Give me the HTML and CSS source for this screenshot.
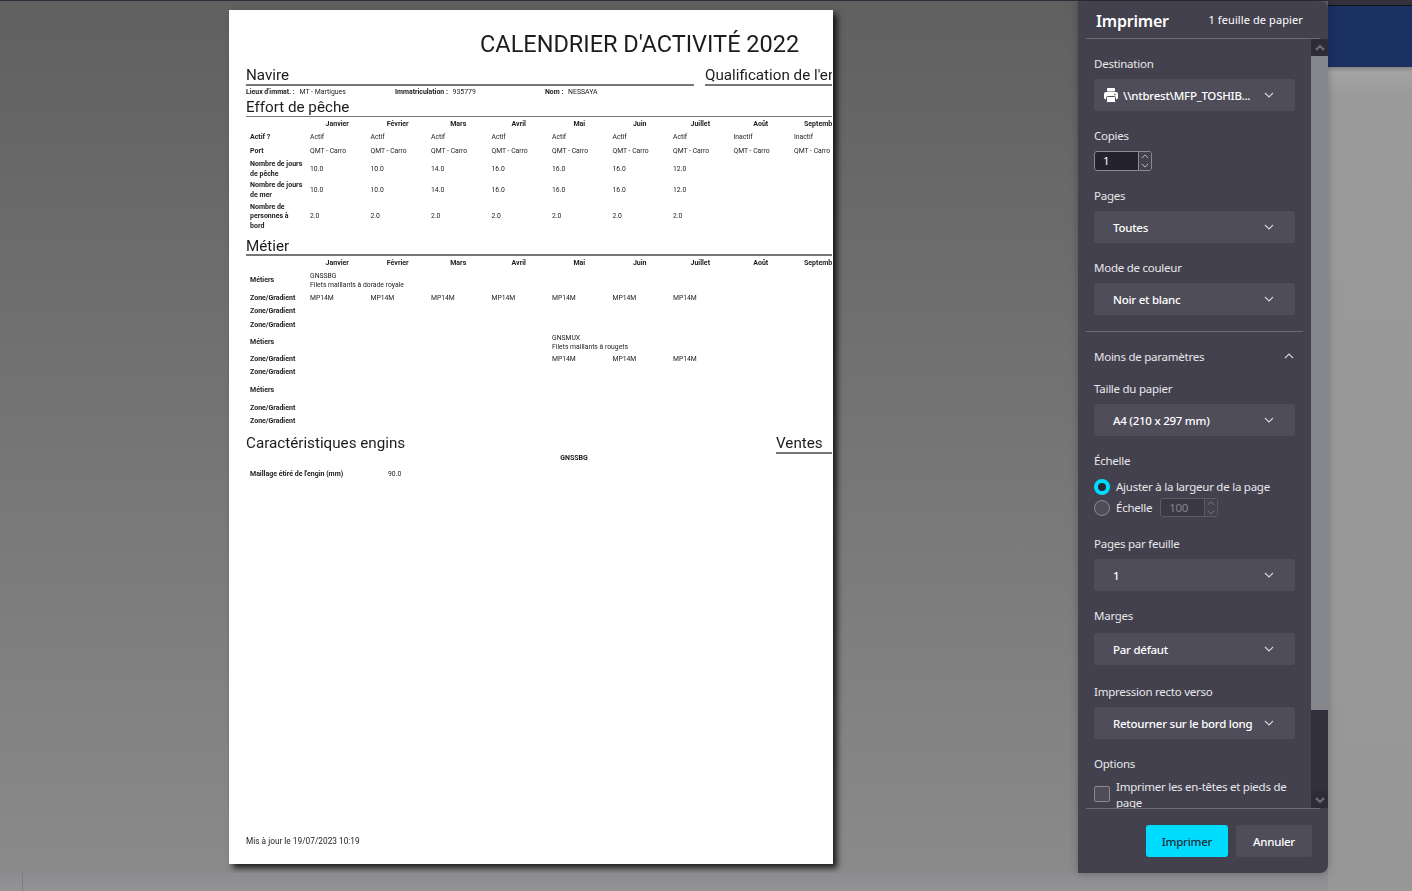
FILE: index.html
```html
<!DOCTYPE html>
<html lang="fr">
<head>
<meta charset="UTF-8">
<meta name="viewport" content="width=device-width, initial-scale=1.0">
<title>Imprimer</title>
<link rel="stylesheet" href="styles.css">
</head>
<body>
  <svg class="defs" aria-hidden="true">
    <symbol id="chev-down" viewBox="0 0 10 10"><path d="M1 3l4 4 4-4" fill="none" stroke="currentColor" stroke-width="1.1"/></symbol>
    <symbol id="chev-up" viewBox="0 0 10 10"><path d="M1 7l4-4 4 4" fill="none" stroke="currentColor" stroke-width="1.1"/></symbol>
    <symbol id="arrow-up" viewBox="0 0 10 10"><path d="M1 7l4-4 4 4" fill="none" stroke="currentColor" stroke-width="2.2"/></symbol>
    <symbol id="arrow-down" viewBox="0 0 10 10"><path d="M1 3l4 4 4-4" fill="none" stroke="currentColor" stroke-width="2.2"/></symbol>
  </svg>

  <div class="stage">
    <div class="preview">
      <div class="canvas">
        <div class="paper">
          <div class="sheet">
            <h1 class="doc-title">CALENDRIER D'ACTIVITÉ 2022</h1>

            <div class="head-row">
              <h2 class="head head-navire">Navire</h2>
              <h2 class="head head-qualif">Qualification de l'entreprise</h2>
            </div>
            <div class="info-row">
              <span class="info info-lieu"><b>Lieux d'immat. :</b> MT - Martigues</span>
              <span class="info info-immat"><b>Immatriculation :</b> 935779</span>
              <span class="info"><b>Nom :</b> NESSAYA</span>
            </div>

            <h2 class="head head-thin">Effort de pêche</h2>
            <table class="grid">
              <colgroup><col class="col-label"><col class="col-m"><col class="col-m"><col class="col-m"><col class="col-m"><col class="col-m"><col class="col-m"><col class="col-m"><col class="col-m"><col class="col-m"></colgroup>
              <tr class="r-13 months"><th></th><th>Janvier</th><th>Février</th><th>Mars</th><th>Avril</th><th>Mai</th><th>Juin</th><th>Juillet</th><th>Août</th><th>Septembre</th></tr>
              <tr class="r-14"><th>Actif ?</th><td>Actif</td><td>Actif</td><td>Actif</td><td>Actif</td><td>Actif</td><td>Actif</td><td>Actif</td><td>Inactif</td><td>Inactif</td></tr>
              <tr class="r-14"><th>Port</th><td>QMT - Carro</td><td>QMT - Carro</td><td>QMT - Carro</td><td>QMT - Carro</td><td>QMT - Carro</td><td>QMT - Carro</td><td>QMT - Carro</td><td>QMT - Carro</td><td>QMT - Carro</td></tr>
              <tr class="r-21"><th>Nombre de jours de pêche</th><td>10.0</td><td>10.0</td><td>14.0</td><td>16.0</td><td>16.0</td><td>16.0</td><td>12.0</td></tr>
              <tr class="r-21"><th>Nombre de jours de mer</th><td>10.0</td><td>10.0</td><td>14.0</td><td>16.0</td><td>16.0</td><td>16.0</td><td>12.0</td></tr>
              <tr class="r-32"><th>Nombre de personnes à bord</th><td>2.0</td><td>2.0</td><td>2.0</td><td>2.0</td><td>2.0</td><td>2.0</td><td>2.0</td></tr>
            </table>

            <h2 class="head head-metier">Métier</h2>
            <table class="grid">
              <colgroup><col class="col-label"><col class="col-m"><col class="col-m"><col class="col-m"><col class="col-m"><col class="col-m"><col class="col-m"><col class="col-m"><col class="col-m"><col class="col-m"></colgroup>
              <tr class="r-13 months"><th></th><th>Janvier</th><th>Février</th><th>Mars</th><th>Avril</th><th>Mai</th><th>Juin</th><th>Juillet</th><th>Août</th><th>Septembre</th></tr>
              <tr class="r-22"><th>Métiers</th><td class="nowrap">GNSSBG<br>Filets maillants à dorade royale</td></tr>
              <tr class="r-13"><th>Zone/Gradient</th><td>MP14M</td><td>MP14M</td><td>MP14M</td><td>MP14M</td><td>MP14M</td><td>MP14M</td><td>MP14M</td></tr>
              <tr class="r-14"><th>Zone/Gradient</th></tr>
              <tr class="r-13"><th>Zone/Gradient</th></tr>
              <tr class="r-22"><th>Métiers</th><td></td><td></td><td></td><td></td><td class="nowrap">GNSMUX<br>Filets maillants à rougets</td></tr>
              <tr class="r-12"><th>Zone/Gradient</th><td></td><td></td><td></td><td></td><td>MP14M</td><td>MP14M</td><td>MP14M</td></tr>
              <tr class="r-14"><th>Zone/Gradient</th></tr>
              <tr class="r-22"><th>Métiers</th></tr>
              <tr class="r-13"><th>Zone/Gradient</th></tr>
              <tr class="r-14"><th>Zone/Gradient</th></tr>
            </table>

            <div class="head-row head-row-engins">
              <h2 class="head head-plain">Caractéristiques engins</h2>
              <h2 class="head head-ventes">Ventes</h2>
            </div>
            <table class="grid grid-engins">
              <colgroup><col class="col-engin"><col class="col-val"></colgroup>
              <tr class="r-9 months"><th></th><th>GNSSBG</th></tr>
              <tr class="r-22"><th>Maillage étiré de l'engin (mm)</th><td>90.0</td></tr>
            </table>

            <p class="updated">Mis à jour le 19/07/2023 10:19</p>
          </div>
        </div>
      </div>
      <div class="strip"><div class="strip-cell"></div></div>
    </div>

    <div class="side">
      <div class="side-top"></div>
      <div class="side-blue"></div>
      <div class="side-rest"></div>
    </div>

    <aside class="dialog">
      <header class="dialog-head">
        <span class="dialog-title">Imprimer</span>
        <span class="dialog-count">1 feuille de papier</span>
      </header>

      <div class="dialog-body">
        <div class="settings">
          <div class="field">
            <label class="lbl">Destination</label>
            <div class="select select-printer">
              <svg class="printer" viewBox="0 0 16 16">
                <rect class="printer-fill" x="4" y="1" width="8" height="3.500" rx="0.800"/>
                <rect class="printer-fill" x="1" y="5" width="14" height="7.500" rx="2"/>
                <circle class="printer-cut" cx="12" cy="7.500" r="0.800"/>
                <rect class="printer-fill printer-tray" x="3.500" y="9.500" width="9" height="6" rx="1"/>
              </svg>
              <span class="select-text">\\ntbrest\MFP_TOSHIB...</span>
              <svg class="chev"><use href="#chev-down"/></svg>
            </div>
          </div>
          <div class="field">
            <label class="lbl">Copies</label>
            <div class="spin spin-copies">
              <span class="spin-val">1</span>
              <span class="spin-btns"><svg><use href="#chev-up"/></svg><svg><use href="#chev-down"/></svg></span>
            </div>
          </div>
          <div class="field">
            <label class="lbl">Pages</label>
            <div class="select"><span class="select-text">Toutes</span><svg class="chev"><use href="#chev-down"/></svg></div>
          </div>
          <div class="field">
            <label class="lbl">Mode de couleur</label>
            <div class="select"><span class="select-text">Noir et blanc</span><svg class="chev"><use href="#chev-down"/></svg></div>
          </div>

          <hr class="sep">

          <div class="more"><span>Moins de paramètres</span><svg class="chev"><use href="#chev-up"/></svg></div>

          <div class="field">
            <label class="lbl">Taille du papier</label>
            <div class="select"><span class="select-text">A4 (210 x 297 mm)</span><svg class="chev"><use href="#chev-down"/></svg></div>
          </div>
          <div class="field field-scale">
            <label class="lbl">Échelle</label>
            <div class="radio-row radio-row-first"><span class="radio radio-on"></span><span class="opt">Ajuster à la largeur de la page</span></div>
            <div class="radio-row">
              <span class="radio"></span><span class="opt">Échelle</span>
              <div class="spin spin-scale">
                <span class="spin-val">100</span>
                <span class="spin-btns"><svg><use href="#chev-up"/></svg><svg><use href="#chev-down"/></svg></span>
              </div>
            </div>
          </div>
          <div class="field">
            <label class="lbl">Pages par feuille</label>
            <div class="select"><span class="select-text">1</span><svg class="chev"><use href="#chev-down"/></svg></div>
          </div>
          <div class="field field-marges">
            <label class="lbl lbl-wide">Marges</label>
            <div class="select"><span class="select-text">Par défaut</span><svg class="chev"><use href="#chev-down"/></svg></div>
          </div>
          <div class="field">
            <label class="lbl">Impression recto verso</label>
            <div class="select"><span class="select-text">Retourner sur le bord long</span><svg class="chev"><use href="#chev-down"/></svg></div>
          </div>
          <div class="field">
            <label class="lbl">Options</label>
            <div class="check-row"><span class="check"></span><span class="opt opt-wrap">Imprimer les en-têtes et pieds de page</span></div>
          </div>
        </div>

        <div class="scrollbar">
          <div class="sb-btn"><svg><use href="#arrow-up"/></svg></div>
          <div class="sb-thumb"></div>
          <div class="sb-track"></div>
          <div class="sb-btn"><svg><use href="#arrow-down"/></svg></div>
        </div>
      </div>

      <footer class="dialog-foot">
        <button class="btn btn-primary">Imprimer</button>
        <button class="btn">Annuler</button>
      </footer>
    </aside>
  </div>
</body>
</html>
```

FILE: styles.css
```css
* {
  box-sizing: border-box;
}

html, body {
  margin: 0;
  padding: 0;
}

.defs {
  display: none;
}

.stage {
  position: relative;
  display: flex;
  width: 1412px;
  height: 891px;
  overflow: hidden;
  background-color: #979798;
}

/* preview area */
.preview {
  width: 1328px;
  display: flex;
  flex-direction: column;
}

.canvas {
  height: 873px;
  padding: 9px 0 0 229px;
  border-top: 1px solid #2f2d3a;
  background: linear-gradient(#606060, #8a8a8a);
}

.strip {
  flex: 1;
  background: linear-gradient(#8c8c8e, #949496);
}

.strip-cell {
  width: 23px;
  height: 100%;
  border-right: 1px solid #7c7c7e;
}

.paper {
  width: 604px;
  height: 854px;
  padding: 0 1px 0 17px;
  background-color: #ffffff;
  box-shadow: 4px 4px 6px rgba(0, 0, 0, 0.8);
}

/* the preview is a scaled-down pdf, so the text is a bit soft */
.sheet {
  height: 100%;
  display: flex;
  flex-direction: column;
  overflow: hidden;
  color: #1c1c1c;
  font-family: Roboto, "Liberation Sans", sans-serif;
  filter: blur(0.25px);
}

.doc-title {
  margin: 20px 0 8px;
  padding-left: 234px;
  font-size: 23.500px;
  line-height: 28px;
  font-weight: 400;
  white-space: nowrap;
}

.head-row {
  display: flex;
  gap: 11px;
}

.head {
  margin: 0;
  font-size: 15.200px;
  line-height: 19px;
  font-weight: 400;
  white-space: nowrap;
  flex-shrink: 0;
}

.head-navire,
.head-qualif,
.head-ventes,
.head-metier {
  border-bottom: 2px solid #777777;
}

.head-navire,
.head-qualif {
  line-height: 18px;
}

.head-navire {
  width: 448px;
}

.head-thin {
  padding-top: 2px;
  line-height: 17px;
  border-bottom: 1px solid #777777;
}

.head-metier {
  margin-top: 2px;
  padding-top: 4px;
  line-height: 15px;
}

.head-row-engins {
  justify-content: space-between;
  margin-top: 4px;
}

.head-row-engins .head {
  padding-top: 2px;
  line-height: 17px;
}

.head-ventes {
  width: 56px;
}

.info-row {
  display: flex;
  height: 11px;
  font-size: 6.900px;
  line-height: 12px;
  white-space: nowrap;
}

.info b {
  margin-right: 3px;
}

.info-lieu {
  width: 149px;
}

.info-immat {
  width: 150px;
}

.grid {
  width: 605.500px;
  flex-shrink: 0;
  margin-top: 1px;
  table-layout: fixed;
  border-collapse: collapse;
  font-size: 6.800px;
  line-height: 9.500px;
}

.col-label {
  width: 61px;
}

.col-m {
  width: 60.500px;
}

.col-engin {
  width: 139px;
}

.col-val {
  width: 378px;
}

.grid-engins {
  width: 517px;
  margin-top: 0;
}

.grid th,
.grid td {
  padding: 0 0 0 4px;
  text-align: left;
  vertical-align: middle;
}

.grid th {
  padding-right: 3px;
  font-size: 7px;
}

.grid td {
  padding-left: 3px;
  font-weight: 400;
}

.grid .months th {
  padding: 0;
  text-align: center;
}

.grid-engins th {
  white-space: nowrap;
}

.nowrap {
  white-space: nowrap;
}

.r-9 { height: 9px; }
.r-12 { height: 12px; }
.r-13 { height: 13px; }
.r-14 { height: 14px; }
.r-21 { height: 21px; }
.r-22 { height: 22px; }
.r-32 { height: 32px; }

.updated {
  margin: auto 0 18px;
  font-size: 8.300px;
  line-height: 10px;
}

/* right of the dialog */
.side {
  flex: 1;
  display: flex;
  flex-direction: column;
}

.side-top {
  height: 6px;
  background-color: #34313d;
  border-bottom: 1px solid #111111;
}

.side-blue {
  height: 61px;
  background-color: #1a3161;
}

.side-rest {
  flex: 1;
  background: linear-gradient(#858586 0, #a4a4a5 5px, #9a9a9b 30px, #979798 100%);
}

/* print dialog */
.dialog {
  position: absolute;
  left: 1078px;
  top: 1px;
  width: 250px;
  height: 872px;
  display: flex;
  flex-direction: column;
  padding-left: 8px;
  border-radius: 0 8px 8px 0;
  background-color: #43414e;
  box-shadow: 0 0 8px rgba(0, 0, 0, 0.25);
  color: #ffffff;
  font-family: "Noto Sans", "Open Sans", sans-serif;
  font-size: 11.500px;
  letter-spacing: -0.25px;
}

.dialog-head {
  width: 234px;
  height: 38px;
  flex-shrink: 0;
  display: flex;
  align-items: center;
  justify-content: space-between;
  padding: 2px 17px 0 10px;
  border-bottom: 1px solid #6b6975;
}

.dialog-title {
  font-size: 16px;
  font-weight: 600;
  letter-spacing: -0.2px;
}

.dialog-count {
  margin-bottom: 2px;
  font-size: 11px;
  letter-spacing: 0.1px;
}

.dialog-body {
  flex: 1;
  min-height: 0;
  display: flex;
}

.settings {
  width: 225px;
  overflow: hidden;
  padding-top: 16px;
}

.field {
  width: 201px;
  margin: 0 0 16px 8px;
}

.field-scale {
  margin-bottom: 17px;
}

.field-marges {
  margin-bottom: 18px;
}

.lbl {
  display: block;
  height: 16px;
  margin-bottom: 8px;
  line-height: 18px;
  color: #e8e8ea;
}

.lbl-wide {
  margin-bottom: 10px;
}

.select {
  display: flex;
  align-items: center;
  justify-content: space-between;
  height: 32px;
  padding: 0 21px 0 19px;
  border-radius: 3px;
  background-color: #4f4d5a;
  font-weight: 500;
  white-space: nowrap;
}

.select-printer {
  padding-left: 9px;
}

.printer {
  width: 16px;
  height: 16px;
  flex-shrink: 0;
  margin-right: 4px;
}

.printer-fill {
  fill: #ffffff;
}

.printer-cut {
  fill: #4f4d5a;
}

.printer-tray {
  stroke: #4f4d5a;
  stroke-width: 1;
}

.select-printer .select-text {
  flex: 1;
  white-space: nowrap;
}

.chev {
  width: 10px;
  height: 10px;
  flex-shrink: 0;
  color: #d8d8dc;
}

.spin {
  display: flex;
  height: 20px;
  border: 1px solid #8a8994;
  border-radius: 3px;
  overflow: hidden;
}

.spin-copies {
  width: 58px;
  background-color: #24222d;
}

.spin-val {
  flex: 1;
  padding-left: 8px;
  line-height: 18px;
}

.spin-btns {
  width: 13px;
  display: flex;
  flex-direction: column;
  border-left: 1px solid #8a8994;
  background-color: #43414e;
  color: #c8c8cc;
}

.spin-btns svg {
  width: 8px;
  height: 9px;
  margin-left: 2px;
}

.sep {
  width: 217px;
  height: 1px;
  margin: 0 0 16px;
  border: none;
  background-color: #6b6975;
}

.more {
  display: flex;
  align-items: center;
  justify-content: space-between;
  height: 16px;
  margin: 0 17px 16px 8px;
  color: #e8e8ea;
}

.radio-row {
  display: flex;
  align-items: center;
  height: 21px;
}

.radio-row-first {
  margin-top: 1px;
}

.radio {
  width: 16px;
  height: 16px;
  margin-right: 6px;
  flex-shrink: 0;
  border: 1px solid #8a8994;
  border-radius: 50%;
  background-color: #4f4d5a;
}

.radio-on {
  border: 4px solid #00dcff;
  background-color: #2a2834;
}

.spin-scale {
  width: 58px;
  height: 19px;
  margin-left: 8px;
  border-color: #5c5a67;
  background-color: #3a3845;
  color: #85838d;
}

.spin-scale .spin-btns {
  border-left-color: #5c5a67;
  color: #85838d;
}

.check-row {
  display: flex;
  align-items: flex-start;
  margin-top: 1px;
}

.check {
  width: 16px;
  height: 16px;
  margin: 7px 6px 0 0;
  flex-shrink: 0;
  border: 1px solid #8a8994;
  border-radius: 2px;
  background-color: #4f4d5a;
}

.opt {
  color: #e8e8ea;
}

.opt-wrap {
  line-height: 16px;
}

.scrollbar {
  width: 17px;
  display: flex;
  flex-direction: column;
}

.sb-btn {
  height: 17px;
  flex-shrink: 0;
  display: flex;
  align-items: center;
  justify-content: center;
  background-color: #2e2c37;
  color: #6f6e76;
}

.sb-btn svg {
  width: 10px;
  height: 10px;
}

.sb-thumb {
  height: 654px;
  background-color: #85858c;
}

.sb-track {
  flex: 1;
  background-color: #32303c;
}

.dialog-foot {
  width: 234px;
  height: 65px;
  flex-shrink: 0;
  display: flex;
  justify-content: flex-end;
  gap: 8px;
  padding: 16px 8px 0 0;
  border-top: 1px solid #6b6975;
}

.btn {
  width: 76px;
  height: 32px;
  padding: 0;
  border: none;
  border-radius: 3px;
  background-color: #4f4d5a;
  color: #ffffff;
  font-family: inherit;
  font-size: 11.500px;
  letter-spacing: -0.25px;
  font-weight: 500;
}

.btn-primary {
  width: 82px;
  background-color: #00dcff;
  color: #1f2f3a;
}
```
